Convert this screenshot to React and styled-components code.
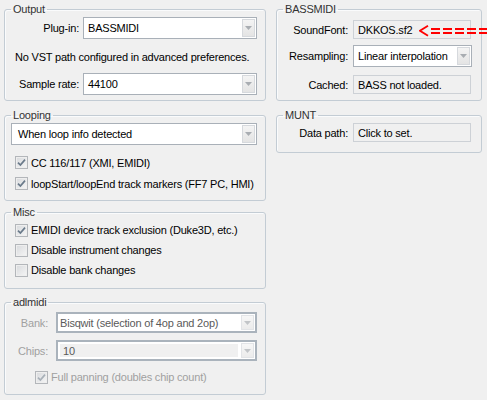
import React from 'react'
import styled, { createGlobalStyle } from 'styled-components'

const GlobalStyle = createGlobalStyle`
        html, body {
                margin: 0;
                padding: 0;
                background: #f0f0f0;
        }
        body {
                font-family: "Liberation Sans", Arial, sans-serif;
                font-size: 11px;
                letter-spacing: -0.2px;
                color: #000;
        }
`;

const Page = styled.div`
        position: relative;
        width: 487px;
        height: 400px;
        overflow: hidden;
        box-sizing: border-box;
        padding: 3px 0 0 4px;
        display: grid;
        grid-template-columns: 262px 206px;
        column-gap: 10px;
        align-items: start;
`;

const Column = styled.div`
        display: flex;
        flex-direction: column;
`;

const Group = styled.fieldset`
        margin: ${p => p.$mt || 0}px 0 0 0;
        padding: 0 0 ${p => p.$pb || 0}px 0;
        min-width: 0;
        border: 1px solid #c3ccd4;
        border-radius: 3px;
        box-shadow: inset 1px 1px 0 #fafbfc;

        legend {
                margin-left: 6px;
                padding: 0 2px;
                line-height: 13px;
                height: 13px;
                color: #333;
        }
`;

const Row = styled.div`
        display: flex;
        align-items: center;
        margin-top: ${p => p.$mt || 0}px;
        padding-left: ${p => p.$pl || 0}px;
`;

const Label = styled.span`
        width: ${p => p.$w}px;
        flex: none;
        text-align: right;
        margin-right: ${p => p.$gap || 4}px;
        color: ${p => (p.$disabled ? '#a0a0a0' : '#000')};
        white-space: nowrap;
`;

const Note = styled.div`
        margin-top: ${p => p.$mt}px;
        padding-left: 10px;
        line-height: 13px;
        white-space: nowrap;
`;

const Field = styled.div`
        box-sizing: border-box;
        width: ${p => p.$w}px;
        height: ${p => p.$h || 19}px;
        border: 1px solid #cdd1d6;
        background: #f0f0f0;
        padding-left: 4px;
        display: flex;
        align-items: center;
        white-space: nowrap;
        cursor: default;
`;

const ComboBox = styled.div`
        box-sizing: border-box;
        width: ${p => p.$w}px;
        height: ${p => p.$h || 22}px;
        display: flex;
        border: ${p => (p.$disabled ? '2px solid #aab3bc' : '1px solid #a9b0b8')};
        background: #fff;
`;

const ComboText = styled.div`
        flex: 1;
        display: flex;
        align-items: center;
        min-width: 0;
        white-space: nowrap;
        padding-left: ${p => p.$pl || 4}px;
        color: ${p => (p.$disabled ? '#5a5a5a' : '#000')};
        ${p => p.$inset && `
                margin: 2px;
                background: #f0f0f0;
        `}
`;

const ComboButton = styled.div`
        width: 13px;
        flex: none;
        margin: 1px;
        box-sizing: border-box;
        border: 1px solid #d6d9dd;
        background: linear-gradient(#f4f4f4, #e4e4e4);
        display: flex;
        align-items: center;
        justify-content: center;
        opacity: ${p => (p.$disabled ? 0.7 : 1)};
`;

const CheckRow = styled.label`
        display: flex;
        align-items: center;
        height: ${p => p.$h || 20}px;
        margin-top: ${p => p.$mt || 0}px;
        padding-left: ${p => p.$pl || 10}px;
        color: ${p => (p.$disabled ? '#a0a0a0' : '#000')};
        white-space: nowrap;
`;

const CheckBox = styled.span`
        box-sizing: border-box;
        width: 13px;
        height: 13px;
        flex: none;
        margin-right: 3px;
        border: 1px solid #b3b6ba;
        background: linear-gradient(135deg, #d7d9dc, #f6f6f6);
        box-shadow: inset 0 0 0 1px #eeeeee;
        display: flex;
        align-items: center;
        justify-content: center;
`;

const Arrow = styled.svg`
        position: absolute;
        left: 419px;
        top: 25px;
`;

function DropArrow() {
        return (
                <svg width="7" height="4" viewBox="0 0 7 4">
                        <path d="M0 0 H7 L3.5 4 Z" fill="#a9adb2" />
                </svg>
        )
}

function Combo({ w, h, text, disabled, inset, pl }) {
        return (
                <ComboBox $w={w} $h={h} $disabled={disabled}>
                        <ComboText $disabled={disabled} $inset={inset} $pl={pl}>{text}</ComboText>
                        <ComboButton $disabled={disabled}><DropArrow /></ComboButton>
                </ComboBox>
        )
}

function Check({ checked, children, disabled, pl, h, mt }) {
        return (
                <CheckRow $disabled={disabled} $pl={pl} $h={h} $mt={mt}>
                        <CheckBox>
                                {checked && (
                                        <svg width="9" height="9" viewBox="0 0 9 9">
                                                <path d="M1 4.6 L3.4 7 L8 1.6" fill="none" stroke={disabled ? '#a8b0b8' : '#6a7a8a'} strokeWidth="1.7" />
                                        </svg>
                                )}
                        </CheckBox>
                        {children}
                </CheckRow>
        )
}

export default function App() {
        return (
                <Page>
                        <GlobalStyle />
                        <Column>
                                <Group $pb={5}>
                                        <legend>Output</legend>
                                        <Row $mt={1}>
                                                <Label $w={74}>Plug-in:</Label>
                                                <Combo w={174} text="BASSMIDI" />
                                        </Row>
                                        <Note $mt={12}>No VST path configured in advanced preferences.</Note>
                                        <Row $mt={9}>
                                                <Label $w={74}>Sample rate:</Label>
                                                <Combo w={174} text="44100" />
                                        </Row>
                                </Group>

                                <Group $mt={8} $pb={6}>
                                        <legend>Looping</legend>
                                        <Row $mt={1} $pl={6}>
                                                <Combo w={246} text="When loop info detected" pl={6} />
                                        </Row>
                                        <Check checked h={21} mt={7}>CC 116/117 (XMI, EMIDI)</Check>
                                        <Check checked h={21}>loopStart/loopEnd track markers (FF7 PC, HMI)</Check>
                                </Group>

                                <Group $mt={5} $pb={8}>
                                        <legend>Misc</legend>
                                        <Check checked mt={1}>EMIDI device track exclusion (Duke3D, etc.)</Check>
                                        <Check>Disable instrument changes</Check>
                                        <Check>Disable bank changes</Check>
                                </Group>

                                <Group $mt={7} $pb={9}>
                                        <legend>adlmidi</legend>
                                        <Row $mt={3}>
                                                <Label $w={43} $gap={8} $disabled>Bank:</Label>
                                                <Combo w={201} h={21} text="Bisqwit (selection of 4op and 2op)" disabled pl={2} />
                                        </Row>
                                        <Row $mt={7}>
                                                <Label $w={43} $gap={8} $disabled>Chips:</Label>
                                                <Combo w={201} h={21} text="10" disabled inset pl={3} />
                                        </Row>
                                        <Check checked disabled pl={30} h={16} mt={8}>Full panning (doubles chip count)</Check>
                                </Group>
                        </Column>

                        <Column>
                                <Group $pb={6}>
                                        <legend>BASSMIDI</legend>
                                        <Row $mt={4}>
                                                <Label $w={71} $gap={5}>SoundFont:</Label>
                                                <Field $w={118}>DKKOS.sf2</Field>
                                        </Row>
                                        <Row $mt={6}>
                                                <Label $w={71} $gap={5}>Resampling:</Label>
                                                <Combo w={119} text="Linear interpolation" />
                                        </Row>
                                        <Row $mt={8}>
                                                <Label $w={71} $gap={5}>Cached:</Label>
                                                <Field $w={118}>BASS not loaded.</Field>
                                        </Row>
                                </Group>

                                <Group $mt={8} $pb={10}>
                                        <legend>MUNT</legend>
                                        <Row $mt={1}>
                                                <Label $w={71} $gap={5}>Data path:</Label>
                                                <Field $w={118}>Click to set.</Field>
                                        </Row>
                                </Group>
                        </Column>

                        <Arrow width="68" height="12" viewBox="0 0 68 12">
                                <path d="M9 0.8 L1 5.8 L9 10.8" fill="none" stroke="#ff0000" strokeWidth="1.8" />
                                <path d="M12 4 H68 M12 8 H68" stroke="#ff0000" strokeWidth="2" strokeDasharray="9 3" />
                        </Arrow>
                </Page>
        )
}
